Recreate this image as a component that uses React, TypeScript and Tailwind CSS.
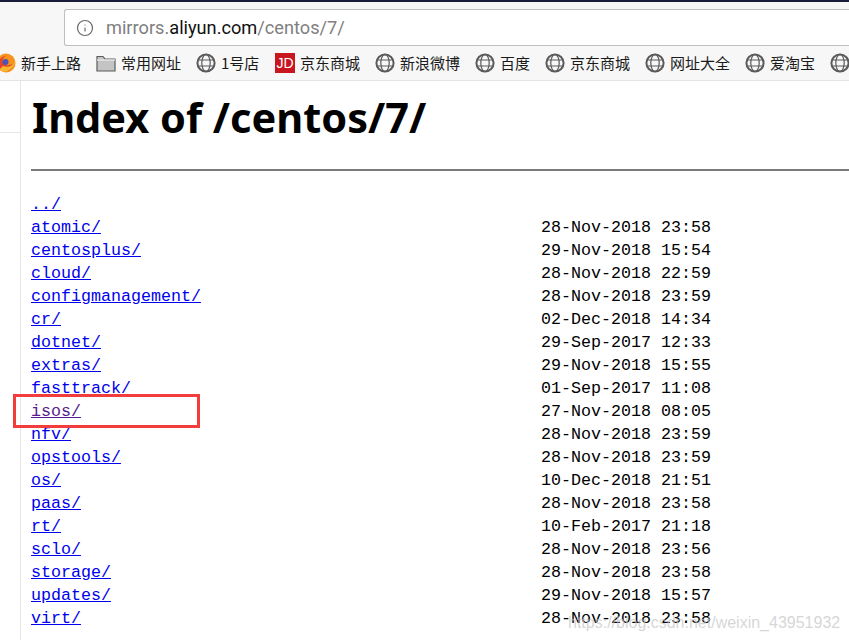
import { Info } from 'lucide-react'

const rows = [
  ['../', ''],
  ['atomic/', '28-Nov-2018 23:58'],
  ['centosplus/', '29-Nov-2018 15:54'],
  ['cloud/', '28-Nov-2018 22:59'],
  ['configmanagement/', '28-Nov-2018 23:59'],
  ['cr/', '02-Dec-2018 14:34'],
  ['dotnet/', '29-Sep-2017 12:33'],
  ['extras/', '29-Nov-2018 15:55'],
  ['fasttrack/', '01-Sep-2017 11:08'],
  ['isos/', '27-Nov-2018 08:05'],
  ['nfv/', '28-Nov-2018 23:59'],
  ['opstools/', '28-Nov-2018 23:59'],
  ['os/', '10-Dec-2018 21:51'],
  ['paas/', '28-Nov-2018 23:58'],
  ['rt/', '10-Feb-2017 21:18'],
  ['sclo/', '28-Nov-2018 23:56'],
  ['storage/', '28-Nov-2018 23:58'],
  ['updates/', '29-Nov-2018 15:57'],
  ['virt/', '28-Nov-2018 23:58'],
]

const bookmarks = [
  { label: '新手上路', icon: 'firefox', w: 'w-[100px]' },
  { label: '常用网址', icon: 'folder', w: 'w-[100px]' },
  { label: '1号店', icon: 'globe', w: 'w-[79px]' },
  { label: '京东商城', icon: 'jd', w: 'w-[100px]' },
  { label: '新浪微博', icon: 'globe', w: 'w-[100px]' },
  { label: '百度', icon: 'globe', w: 'w-[70px]' },
  { label: '京东商城', icon: 'globe', w: 'w-[100px]' },
  { label: '网址大全', icon: 'globe', w: 'w-[100px]' },
  { label: '爱淘宝', icon: 'globe', w: 'w-[85px]' },
  { label: '', icon: 'globe', w: 'w-[30px]' },
]

function BookmarkIcon({ type }: { type: string }) {
  if (type === 'firefox') {
    return (
      <svg width="20" height="20" viewBox="0 0 20 20" className="shrink-0">
        <circle cx="10" cy="10" r="9.5" fill="#f7941e" />
        <path d="M10 3 A7.5 7.5 0 1 0 17.5 11 L13 12 A3.5 3.5 0 0 1 10 3 Z" fill="#e2452a" />
        <circle cx="9.5" cy="9" r="3" fill="#4a55b5" />
        <path d="M3 17 C10 21 18 16 19 8 C17 13 12 15 7 13 Z" fill="#f9b62e" />
      </svg>
    )
  }
  if (type === 'folder') {
    return (
      <svg width="20" height="18" viewBox="0 0 20 18" className="shrink-0">
        <path d="M1 2.5 H7 L9 5 H19 V17 H1 Z" fill="#c4c4c4" stroke="#5c5c5c" strokeWidth="1.2" />
        <path d="M1 6 H19" stroke="#eeeeee" strokeWidth="1.2" />
      </svg>
    )
  }
  if (type === 'jd') {
    return (
      <span className="flex h-5 w-5 shrink-0 items-center justify-center bg-[#c9151e] text-[14px] text-white [font-family:'Liberation_Sans',sans-serif]">
        JD
      </span>
    )
  }
  return (
    <svg width="20" height="20" viewBox="0 0 20 20" fill="none" stroke="#5a5a5a" className="shrink-0">
      <circle cx="10" cy="10" r="8.6" strokeWidth="2" />
      <ellipse cx="10" cy="10" rx="4.2" ry="8.6" strokeWidth="1.2" />
      <path d="M2 7 H18 M2 13 H18" strokeWidth="1.2" />
    </svg>
  )
}

export default function App() {
  return (
    <div className="relative h-[640px] w-[849px] overflow-hidden bg-white [font-family:'Noto_Sans_CJK_SC',sans-serif]">
      {/* Browser chrome */}
      <div className="h-[2px] bg-[#1b1b3a]" />
      <div className="h-[44px] bg-[#f7f7f7] pl-[64px] pt-[7px]">
        <div className="flex h-[37px] items-center rounded-l-[3px] border border-r-0 border-[#bfbfbf] bg-white pl-[11px]">
          <Info size={18} strokeWidth={1.6} className="text-[#666666]" />
          <span className="ml-[12px] text-[18.2px] text-[#808080] [font-family:'Roboto',sans-serif]">
            mirrors.<span className="text-[#111111]">aliyun.com</span>/centos/7/
          </span>
        </div>
      </div>
      <div className="flex h-[35px] items-center overflow-hidden whitespace-nowrap border-b border-[#e4e4e4] bg-[#f7f7f7]">
        <div className="-ml-[4px] flex items-center">
          {bookmarks.map((b, i) => (
            <div key={i} className={`flex shrink-0 items-center gap-[5px] ${b.w}`}>
              <BookmarkIcon type={b.icon} />
              <span className="text-[15px] text-[#1a1a1a]">{b.label}</span>
            </div>
          ))}
        </div>
      </div>

      {/* Page */}
      <div className="flex">
        <div className="h-[560px] w-[21px] shrink-0 border-r border-[#e6e6e6]">
          <div className="h-[52px] border-b border-[#e6e6e6]" />
        </div>
        <div className="min-w-0 flex-1 pl-[10px]">
          <h1 className="ml-px mt-[10px] h-[52px] text-[41.5px] font-bold leading-[52px] text-black [font-family:'Noto_Sans',sans-serif]">
            Index of /centos/7/
          </h1>
          <hr className="mt-[26px] border-t-2 border-[#7a7a7a]" />
          <div className="mt-[22px] text-[16.67px] leading-[23px] text-black [font-family:'Liberation_Mono',monospace]">
            {rows.map(([name, date]) => (
              <div key={name} className="flex h-[23px] whitespace-pre">
                <a
                  href="#"
                  className={`w-[510px] shrink-0 ${name === 'isos/' ? 'text-[#551a8b]' : 'text-[#0000ee]'}`}
                >
                  <span className="underline">{name}</span>
                </a>
                <span>{date}</span>
              </div>
            ))}
          </div>
        </div>
      </div>

      {/* Red annotation box */}
      <div className="absolute left-[13px] top-[394px] h-[34px] w-[187px] border-[3px] border-[#f33d3d]" />

      {/* Watermark */}
      <div className="absolute left-[568px] top-[611px] text-[16px] text-[#c4c4c4]/70 [font-family:'Liberation_Sans',sans-serif]">
        https://blog.csdn.net/weixin_43951932
      </div>
    </div>
  )
}
